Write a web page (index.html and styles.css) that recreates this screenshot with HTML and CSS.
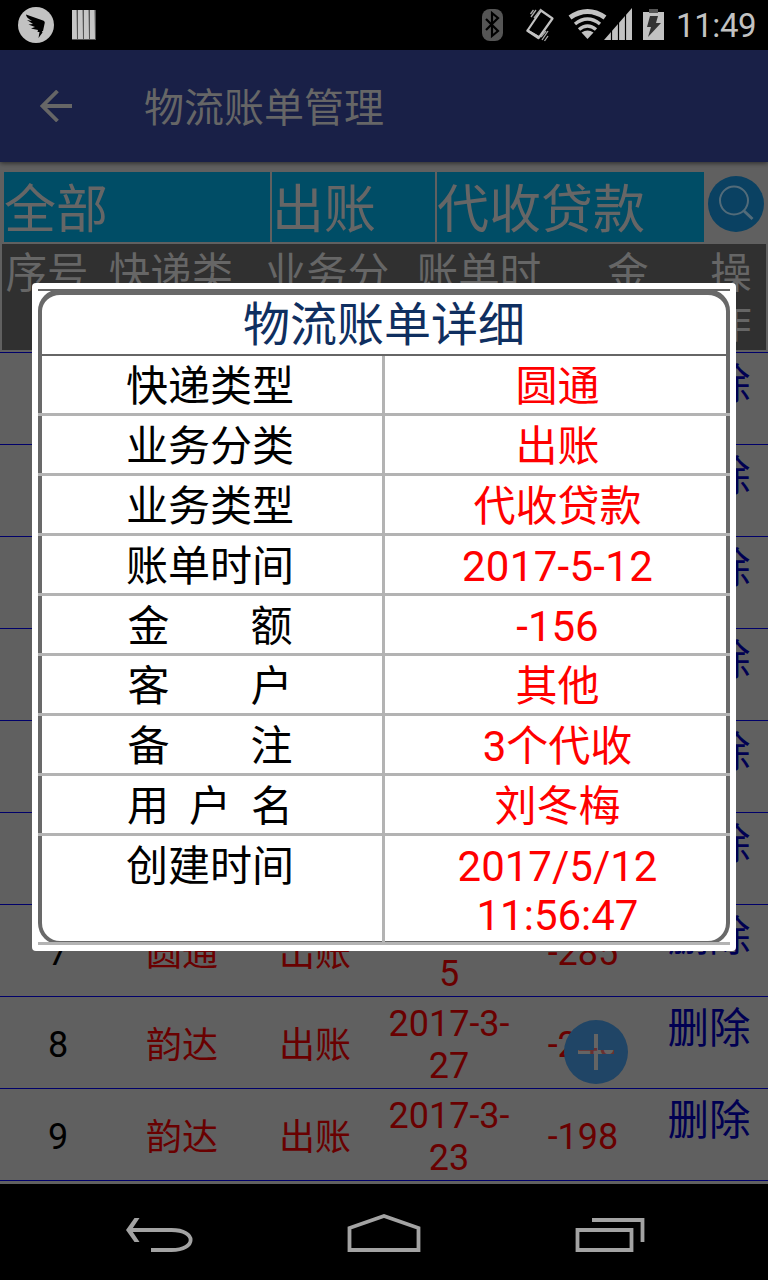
FILE: index.html
```html
<!DOCTYPE html>
<html lang="zh-CN">
<head>
<meta charset="utf-8">
<title>物流账单管理</title>
<link rel="stylesheet" href="styles.css">
</head>
<body>
<div class="screen">
  <header class="status">
    <svg class="status-left" width="80" height="50" viewBox="0 0 80 50">
      <circle cx="18" cy="25" r="18" fill="#c2c2c2"/>
      <path d="M8 14.500L25 20.500Q27.500 21.500 26.500 24L25 31H24L24.500 32.500L20.500 38L21.500 32H19.500L20 30L13 28.500L17 27L10.500 24.500L15 24L9 20L14 21Q8 17.500 8 14.500Z" fill="#000"/>
      <path d="M54 10h24v30h-24z" fill="#555"/>
      <path d="M54 10h4.500l.5 29h-5zM60 10h4.500l.5 29h-5zM66 10h4.500l.5 29h-5zM72 10h4.500l.5 29h-5z" fill="#c6c6c6"/>
    </svg>
    <svg class="status-right" width="188" height="50" viewBox="480 0 188 50">
      <rect x="482" y="9" width="21" height="32" rx="8" fill="#555"/>
      <path d="M486 19l12 12-6 5V13l6 5-12 12" fill="none" stroke="#000" stroke-width="2.200"/>
      <path d="M541 10.500L552.500 18.500L539 37.500L527.500 30.500Z" fill="none" stroke="#c2c2c2" stroke-width="2.200" stroke-linejoin="round"/>
      <path d="M527 29l13 7.500-1.500 3-12-8z" fill="#c2c2c2"/>
      <path d="M531 17l5-7M534 18l7-9M530.500 14l3-4M542 40l6-9M544.500 41l3.500-5M541 37l5-6" stroke="#aaa" stroke-width="1.300"/>
      <g fill="none" stroke="#c2c2c2">
        <path d="M570 17.500Q587.500 5.500 605 17.500" stroke-width="5"/>
        <path d="M575 24Q587.500 14 600 24" stroke-width="3.500"/>
        <path d="M579 29.500Q587.500 22.500 596 29.500" stroke-width="3.500"/>
      </g>
      <path d="M581.500 32.500Q587.500 28.500 593.500 32.500L587.500 39Z" fill="#c2c2c2"/>
      <path d="M604 40L632 8V40Z" fill="#c2c2c2"/>
      <path d="M611.500 30v10M618.500 22v18M625.500 14v26" stroke="#000" stroke-width="1.200"/>
      <path d="M643 12h6V9h9v3h6v28h-21z" fill="#c2c2c2"/>
      <path d="M649 9h9v4h-9z" fill="#555"/>
      <path d="M650 16h8l-2 7h5L648 37l3-10h-4z" fill="#333"/>
    </svg>
    <span class="clock">11:49</span>
  </header>
  <div class="appbar">
    <svg class="back" width="32" height="32" viewBox="0 0 32 32"><path d="M17.500 1L2.500 16l15 15M2.500 16H32" fill="none" stroke="#666" stroke-width="3.800"/></svg>
    <h1 class="title">物流账单管理</h1>
  </div>
  <div class="filters">
    <div class="filter">全部</div><div class="filter">出账</div><div class="filter">代收贷款</div>
    <svg class="search" width="56" height="56" viewBox="0 0 56 56"><circle cx="28" cy="28" r="28" fill="#0a4162"/><circle cx="26" cy="24.500" r="14" fill="none" stroke="#526b79" stroke-width="2"/><path d="M35.500 34.500l9 8.500" stroke="#526b79" stroke-width="3"/></svg>
  </div>
  <div class="thead"><span>序号</span><span>快递类</span><span>业务分</span><span>账单时</span><span>金</span><span>操作</span></div>
  <div class="list">
    <div class="row"><span class="del">删除</span></div>
    <div class="row"><span class="del">删除</span></div>
    <div class="row"><span class="del">删除</span></div>
    <div class="row"><span class="del">删除</span></div>
    <div class="row"><span class="del">删除</span></div>
    <div class="row"><span class="del">删除</span></div>
    <div class="row"><span class="num">7</span><span class="cn">圆通</span><span class="cn">出账</span><span><br>5</span><span>-285</span><span class="del">删除</span></div>
    <div class="row"><span class="num">8</span><span class="cn">韵达</span><span class="cn">出账</span><span>2017-3-<br>27</span><span>-245</span><span class="del">删除</span></div>
    <div class="row"><span class="num">9</span><span class="cn">韵达</span><span class="cn">出账</span><span>2017-3-<br>23</span><span>-198</span><span class="del">删除</span></div>
  </div>
  <nav class="navbar">
    <svg width="768" height="96" viewBox="0 0 768 96" fill="none" stroke="#a3a3a3" stroke-width="3.800">
      <path d="M128 46H169C177 46 179.500 50 179.500 56S177 66 169 66H149.500" transform="translate(0 0)" stroke="none"/>
      <path d="M129 46H170C195.500 46 195.500 66 170 66H149.500" transform="translate(1.500 0)"/>
      <path d="M123.500 46L132 34h5l-8 12 8 12h-5z" transform="translate(2.500 0)" fill="#a3a3a3" stroke="none"/>
      <path d="M349.500 66V44L384 32l34.500 12V66z"/>
      <path d="M577.500 46h54v20h-54zM592 36h50.500v22"/>
    </svg>
  </nav>
  <svg class="fab" width="64" height="64" viewBox="0 0 64 64"><path fill-rule="evenodd" d="M32 0a32 32 0 1 1 0 64a32 32 0 1 1 0-64zM30 14v16H14v4h16v16h4V34h16v-4H34V14z" fill="#204566"/><path d="M30 14v16H14v4h16v16h4V34h16v-4H34V14z" fill="#6b6b6b" fill-opacity=".45"/></svg>
  <section class="dialog">
    <div class="detail">
      <h2 class="detail-title">物流账单详细</h2>
      <div class="item"><span class="label">快递类型</span><span class="value">圆通</span></div>
      <div class="item"><span class="label">业务分类</span><span class="value">出账</span></div>
      <div class="item"><span class="label">业务类型</span><span class="value">代收贷款</span></div>
      <div class="item"><span class="label">账单时间</span><span class="value date">2017-5-12</span></div>
      <div class="item"><span class="label"><i>金</i><i>额</i></span><span class="value">-156</span></div>
      <div class="item"><span class="label"><i>客</i><i>户</i></span><span class="value">其他</span></div>
      <div class="item"><span class="label"><i>备</i><i>注</i></span><span class="value">3个代收</span></div>
      <div class="item"><span class="label"><i>用</i><i>户</i><i>名</i></span><span class="value">刘冬梅</span></div>
      <div class="item last"><span class="label">创建时间</span><span class="value">2017/5/12<br>11:56:47</span></div>
    </div>
  </section>
</div>
</body>
</html>
```
FILE: styles.css
```css
* { box-sizing: border-box; }
body { margin: 0; background: #606060; font-family: Roboto, "Noto Sans CJK SC", sans-serif; }
.screen { position: relative; width: 768px; height: 1280px; overflow: hidden; display: flex; flex-direction: column; background: #606060; }
.status { height: 50px; flex: none; display: flex; align-items: center; background: #000; padding-left: 18px; }
.status-left { margin-right: 382px; }
.clock { margin-left: 8px; font-size: 33px; letter-spacing: -.4px; line-height: 50px; padding-top: 2px; color: #c2c2c2; }
.appbar { height: 112px; flex: none; display: flex; align-items: center; padding-left: 40px; background: #192047; box-shadow: 0 1px 5px rgba(0, 0, 0, .6); }
.title { margin: 0 0 0 72px; padding-top: 5px; font-size: 40px; font-weight: 400; color: #666; line-height: 56px; }
.filters { height: 82px; flex: none; display: grid; grid-template-columns: 266px 163px 267px 56px; column-gap: 2px; padding: 10px 4px 2px; }
.filter { background: #004d66; color: #666; font-size: 52px; line-height: 77px; height: 70px; white-space: nowrap; }
.search { margin: 4px 0 0 2px; }
.thead { height: 106px; flex: none; margin: 0 2px 2px; display: grid; grid-template-columns: 90px 158px 154px 150px 148px 58px; justify-items: center; background: #303030; color: #666; font-size: 41.5px; line-height: 50px; padding-top: 5px; }
.thead span { max-width: 126px; text-align: center; word-break: break-all; }
.thead span:last-child { width: 42px; }
.list { height: 832px; flex: none; }
.row { height: 92px; display: grid; grid-template-columns: 116px 132px 134px 134px 134px 118px; align-items: center; border-top: 1px solid #00006a; padding-top: 5px; text-align: center; font-size: 36px; line-height: 42px; color: #690000; }
.list .row:last-child { height: 93px; border-bottom: 1px solid #00006a; }
.row .num { color: #000; }
.row .cn { padding-top: 1px; }
.row .del { grid-column: 6; align-self: start; color: #000052; font-size: 41.5px; line-height: 54px; }
.navbar { height: 96px; flex: none; background: #000; }
.fab { position: absolute; left: 564px; top: 1020px; }
.dialog { position: absolute; left: 32px; top: 283px; width: 704px; height: 668px; padding: 6px; border-radius: 4px; background: #fff; }
.detail { position: relative; border-top: 2px solid #666; }
.detail::before { content: ""; position: absolute; left: 0; right: 0; top: -2px; bottom: 0; border: 4px solid #696969; border-top-width: 6px; border-radius: 22px; }
.detail-title { margin: 0 4px; height: 65px; border-bottom: 2px solid #666; text-align: center; font-size: 47px; font-weight: 400; line-height: 68px; color: #0f2f60; }
.item { position: relative; height: 60px; display: grid; grid-template-columns: 344px 1fr; border-bottom: 3px solid #b3b3b3; font-size: 42px; line-height: 61px; }
.label { display: flex; justify-content: center; color: #000; }
.label i { font-style: normal; width: 62px; text-align: center; }
.label:has(i:nth-child(2):last-child) i { width: 123px; }
.value { border-left: 3px solid #b3b3b3; text-align: center; color: #f00; }
.value.date { letter-spacing: .3px; }
.item.last { height: 109px; }
.last .value { line-height: 49px; padding-top: 6px; }
```
